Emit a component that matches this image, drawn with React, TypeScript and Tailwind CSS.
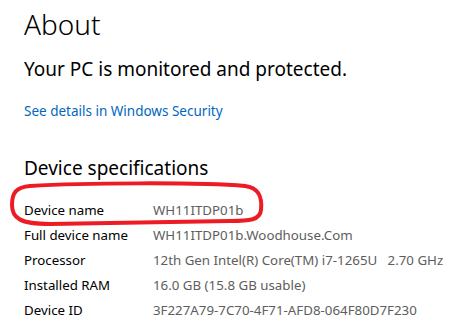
const specs: [string, string][] = [
  ['Device name', 'WH11ITDP01b'],
  ['Full device name', 'WH11ITDP01b.Woodhouse.Com'],
  ['Processor', '12th Gen Intel(R) Core(TM) i7-1265U   2.70 GHz'],
  ['Installed RAM', '16.0 GB (15.8 GB usable)'],
  ['Device ID', '3F227A79-7C70-4F71-AFD8-064F80D7F230'],
]

export default function App() {
  return (
    <div
      className="relative h-[315px] w-[452px] overflow-hidden bg-white pl-6 text-black"
      style={{ fontFamily: '"Noto Sans", "Open Sans", sans-serif' }}
    >
      <h1 className="pt-[4px] text-[28px] leading-[40px] font-light">About</h1>
      <p className="mt-[12px] text-[19px] leading-[26px]">Your PC is monitored and protected.</p>
      <a className="mt-[19px] block text-[13.5px] leading-[20px] text-[#0067c0]">See details in Windows Security</a>
      <h2 className="mt-[34px] text-[19px] leading-[26px]">Device specifications</h2>

      <div className="mt-[17px] flex flex-col">
        {specs.map(([label, value]) => (
          <div key={label} className="flex h-[25px] items-center text-[13.3px]">
            <span className="w-[129px] shrink-0">{label}</span>
            <span className="whitespace-pre text-[#5d5d5d]">{value}</span>
          </div>
        ))}
      </div>

      {/* hand-drawn highlight */}
      <svg className="pointer-events-none absolute left-0 top-0" width="452" height="315" viewBox="0 0 452 315" fill="none">
        <path
          d="M30 186 C80 183 200 182 245 186 C261 188 262 200 261 210 C260 220 250 221 230 221 L50 224 C20 224 12 218 12 205 C12 193 16 187 30 186 Z"
          stroke="#ed1c24"
          strokeWidth="4"
          strokeLinejoin="round"
        />
      </svg>
    </div>
  )
}
